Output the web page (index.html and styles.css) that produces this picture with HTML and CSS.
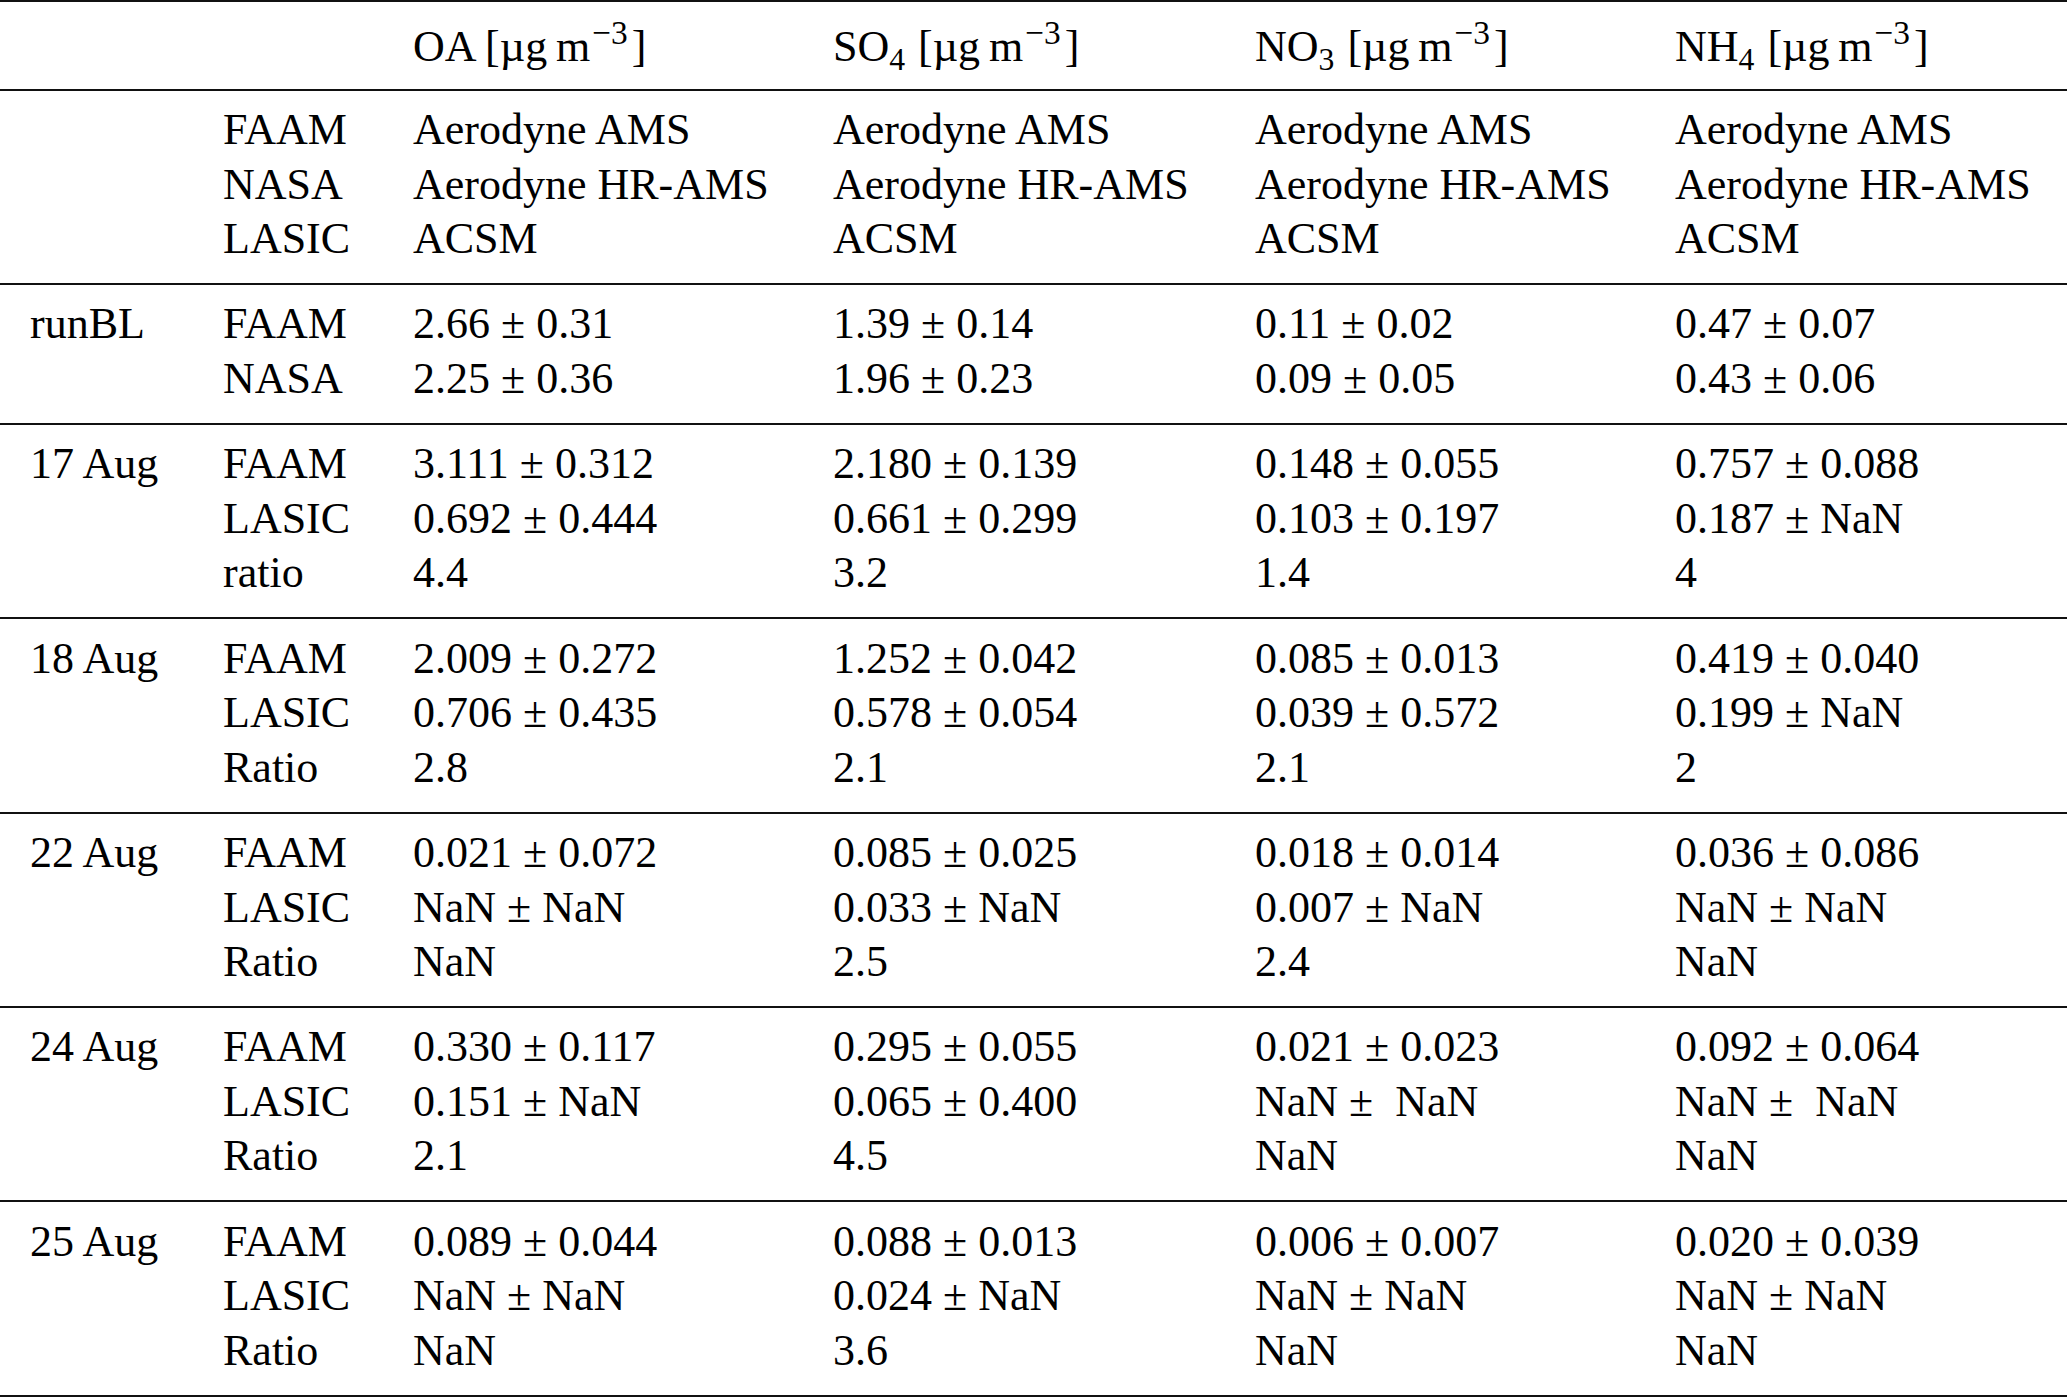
FILE: index.html
```html
<!DOCTYPE html>
<html>
<head>
<meta charset="utf-8">
<link rel="stylesheet" href="styles.css">
</head>
<body>
<table class="tbl">
<colgroup>
<col class="c-date"><col class="c-src"><col class="c-v1"><col class="c-v2"><col class="c-v3"><col class="c-v4">
</colgroup>
<thead>
<tr class="head">
<td></td><td></td>
<td><div class="ln">OA [µg&#8201;m<sup class="sup">−3</sup>]</div></td>
<td><div class="ln">SO<sub class="sub">4</sub> [µg&#8201;m<sup class="sup">−3</sup>]</div></td>
<td><div class="ln">NO<sub class="sub">3</sub> [µg&#8201;m<sup class="sup">−3</sup>]</div></td>
<td><div class="ln">NH<sub class="sub">4</sub> [µg&#8201;m<sup class="sup">−3</sup>]</div></td>
</tr>
</thead>
<tbody>
<tr>
<td></td>
<td><div class="ln">FAAM</div><div class="ln">NASA</div><div class="ln">LASIC</div></td>
<td><div class="ln">Aerodyne AMS</div><div class="ln">Aerodyne HR-AMS</div><div class="ln">ACSM</div></td>
<td><div class="ln">Aerodyne AMS</div><div class="ln">Aerodyne HR-AMS</div><div class="ln">ACSM</div></td>
<td><div class="ln">Aerodyne AMS</div><div class="ln">Aerodyne HR-AMS</div><div class="ln">ACSM</div></td>
<td><div class="ln">Aerodyne AMS</div><div class="ln">Aerodyne HR-AMS</div><div class="ln">ACSM</div></td>
</tr>
<tr>
<td><div class="ln">runBL</div></td>
<td><div class="ln">FAAM</div><div class="ln">NASA</div></td>
<td><div class="ln">2.66 ± 0.31</div><div class="ln">2.25 ± 0.36</div></td>
<td><div class="ln">1.39 ± 0.14</div><div class="ln">1.96 ± 0.23</div></td>
<td><div class="ln">0.11 ± 0.02</div><div class="ln">0.09 ± 0.05</div></td>
<td><div class="ln">0.47 ± 0.07</div><div class="ln">0.43 ± 0.06</div></td>
</tr>
<tr>
<td><div class="ln">17 Aug</div></td>
<td><div class="ln">FAAM</div><div class="ln">LASIC</div><div class="ln">ratio</div></td>
<td><div class="ln">3.111 ± 0.312</div><div class="ln">0.692 ± 0.444</div><div class="ln">4.4</div></td>
<td><div class="ln">2.180 ± 0.139</div><div class="ln">0.661 ± 0.299</div><div class="ln">3.2</div></td>
<td><div class="ln">0.148 ± 0.055</div><div class="ln">0.103 ± 0.197</div><div class="ln">1.4</div></td>
<td><div class="ln">0.757 ± 0.088</div><div class="ln">0.187 ± NaN</div><div class="ln">4</div></td>
</tr>
<tr>
<td><div class="ln">18 Aug</div></td>
<td><div class="ln">FAAM</div><div class="ln">LASIC</div><div class="ln">Ratio</div></td>
<td><div class="ln">2.009 ± 0.272</div><div class="ln">0.706 ± 0.435</div><div class="ln">2.8</div></td>
<td><div class="ln">1.252 ± 0.042</div><div class="ln">0.578 ± 0.054</div><div class="ln">2.1</div></td>
<td><div class="ln">0.085 ± 0.013</div><div class="ln">0.039 ± 0.572</div><div class="ln">2.1</div></td>
<td><div class="ln">0.419 ± 0.040</div><div class="ln">0.199 ± NaN</div><div class="ln">2</div></td>
</tr>
<tr>
<td><div class="ln">22 Aug</div></td>
<td><div class="ln">FAAM</div><div class="ln">LASIC</div><div class="ln">Ratio</div></td>
<td><div class="ln">0.021 ± 0.072</div><div class="ln">NaN ± NaN</div><div class="ln">NaN</div></td>
<td><div class="ln">0.085 ± 0.025</div><div class="ln">0.033 ± NaN</div><div class="ln">2.5</div></td>
<td><div class="ln">0.018 ± 0.014</div><div class="ln">0.007 ± NaN</div><div class="ln">2.4</div></td>
<td><div class="ln">0.036 ± 0.086</div><div class="ln">NaN ± NaN</div><div class="ln">NaN</div></td>
</tr>
<tr>
<td><div class="ln">24 Aug</div></td>
<td><div class="ln">FAAM</div><div class="ln">LASIC</div><div class="ln">Ratio</div></td>
<td><div class="ln">0.330 ± 0.117</div><div class="ln">0.151 ± NaN</div><div class="ln">2.1</div></td>
<td><div class="ln">0.295 ± 0.055</div><div class="ln">0.065 ± 0.400</div><div class="ln">4.5</div></td>
<td><div class="ln">0.021 ± 0.023</div><div class="ln">NaN ±&nbsp; NaN</div><div class="ln">NaN</div></td>
<td><div class="ln">0.092 ± 0.064</div><div class="ln">NaN ±&nbsp; NaN</div><div class="ln">NaN</div></td>
</tr>
<tr>
<td><div class="ln">25 Aug</div></td>
<td><div class="ln">FAAM</div><div class="ln">LASIC</div><div class="ln">Ratio</div></td>
<td><div class="ln">0.089 ± 0.044</div><div class="ln">NaN ± NaN</div><div class="ln">NaN</div></td>
<td><div class="ln">0.088 ± 0.013</div><div class="ln">0.024 ± NaN</div><div class="ln">3.6</div></td>
<td><div class="ln">0.006 ± 0.007</div><div class="ln">NaN ± NaN</div><div class="ln">NaN</div></td>
<td><div class="ln">0.020 ± 0.039</div><div class="ln">NaN ± NaN</div><div class="ln">NaN</div></td>
</tr>
</tbody>
</table>
</body>
</html>
```
FILE: styles.css
```css
html, body {
  margin: 0;
  padding: 0;
  background: #ffffff;
}

body {
  font-family: "Liberation Serif", "Times New Roman", serif;
  color: #000000;
}

.tbl {
  border-collapse: separate;
  border-spacing: 0;
  table-layout: fixed;
  width: 2067px;
  font-size: 44px;
  line-height: 54.5px;
}

.c-date { width: 191px; }
.c-src { width: 190px; }
.c-v1 { width: 420px; }
.c-v2 { width: 422px; }
.c-v3 { width: 420px; }
.c-v4 { width: 424px; }

.tbl td {
  padding: 12.5px 0 16.4px 32px;
  vertical-align: top;
  white-space: nowrap;
  border-bottom: 2px solid #111;
}

.tbl td:first-child {
  padding-left: 30px;
}

.head td {
  border-top: 2px solid #111;
  padding-top: 18px;
  padding-bottom: 14px;
}

.ln {
  height: 54.5px;
}

.sup {
  font-size: 0.76em;
  line-height: 0;
  vertical-align: 17px;
  margin-left: 2px;
  margin-right: 4px;
}

.sub {
  font-size: 0.72em;
  line-height: 0;
  vertical-align: -9px;
  margin-right: 2px;
}
```
